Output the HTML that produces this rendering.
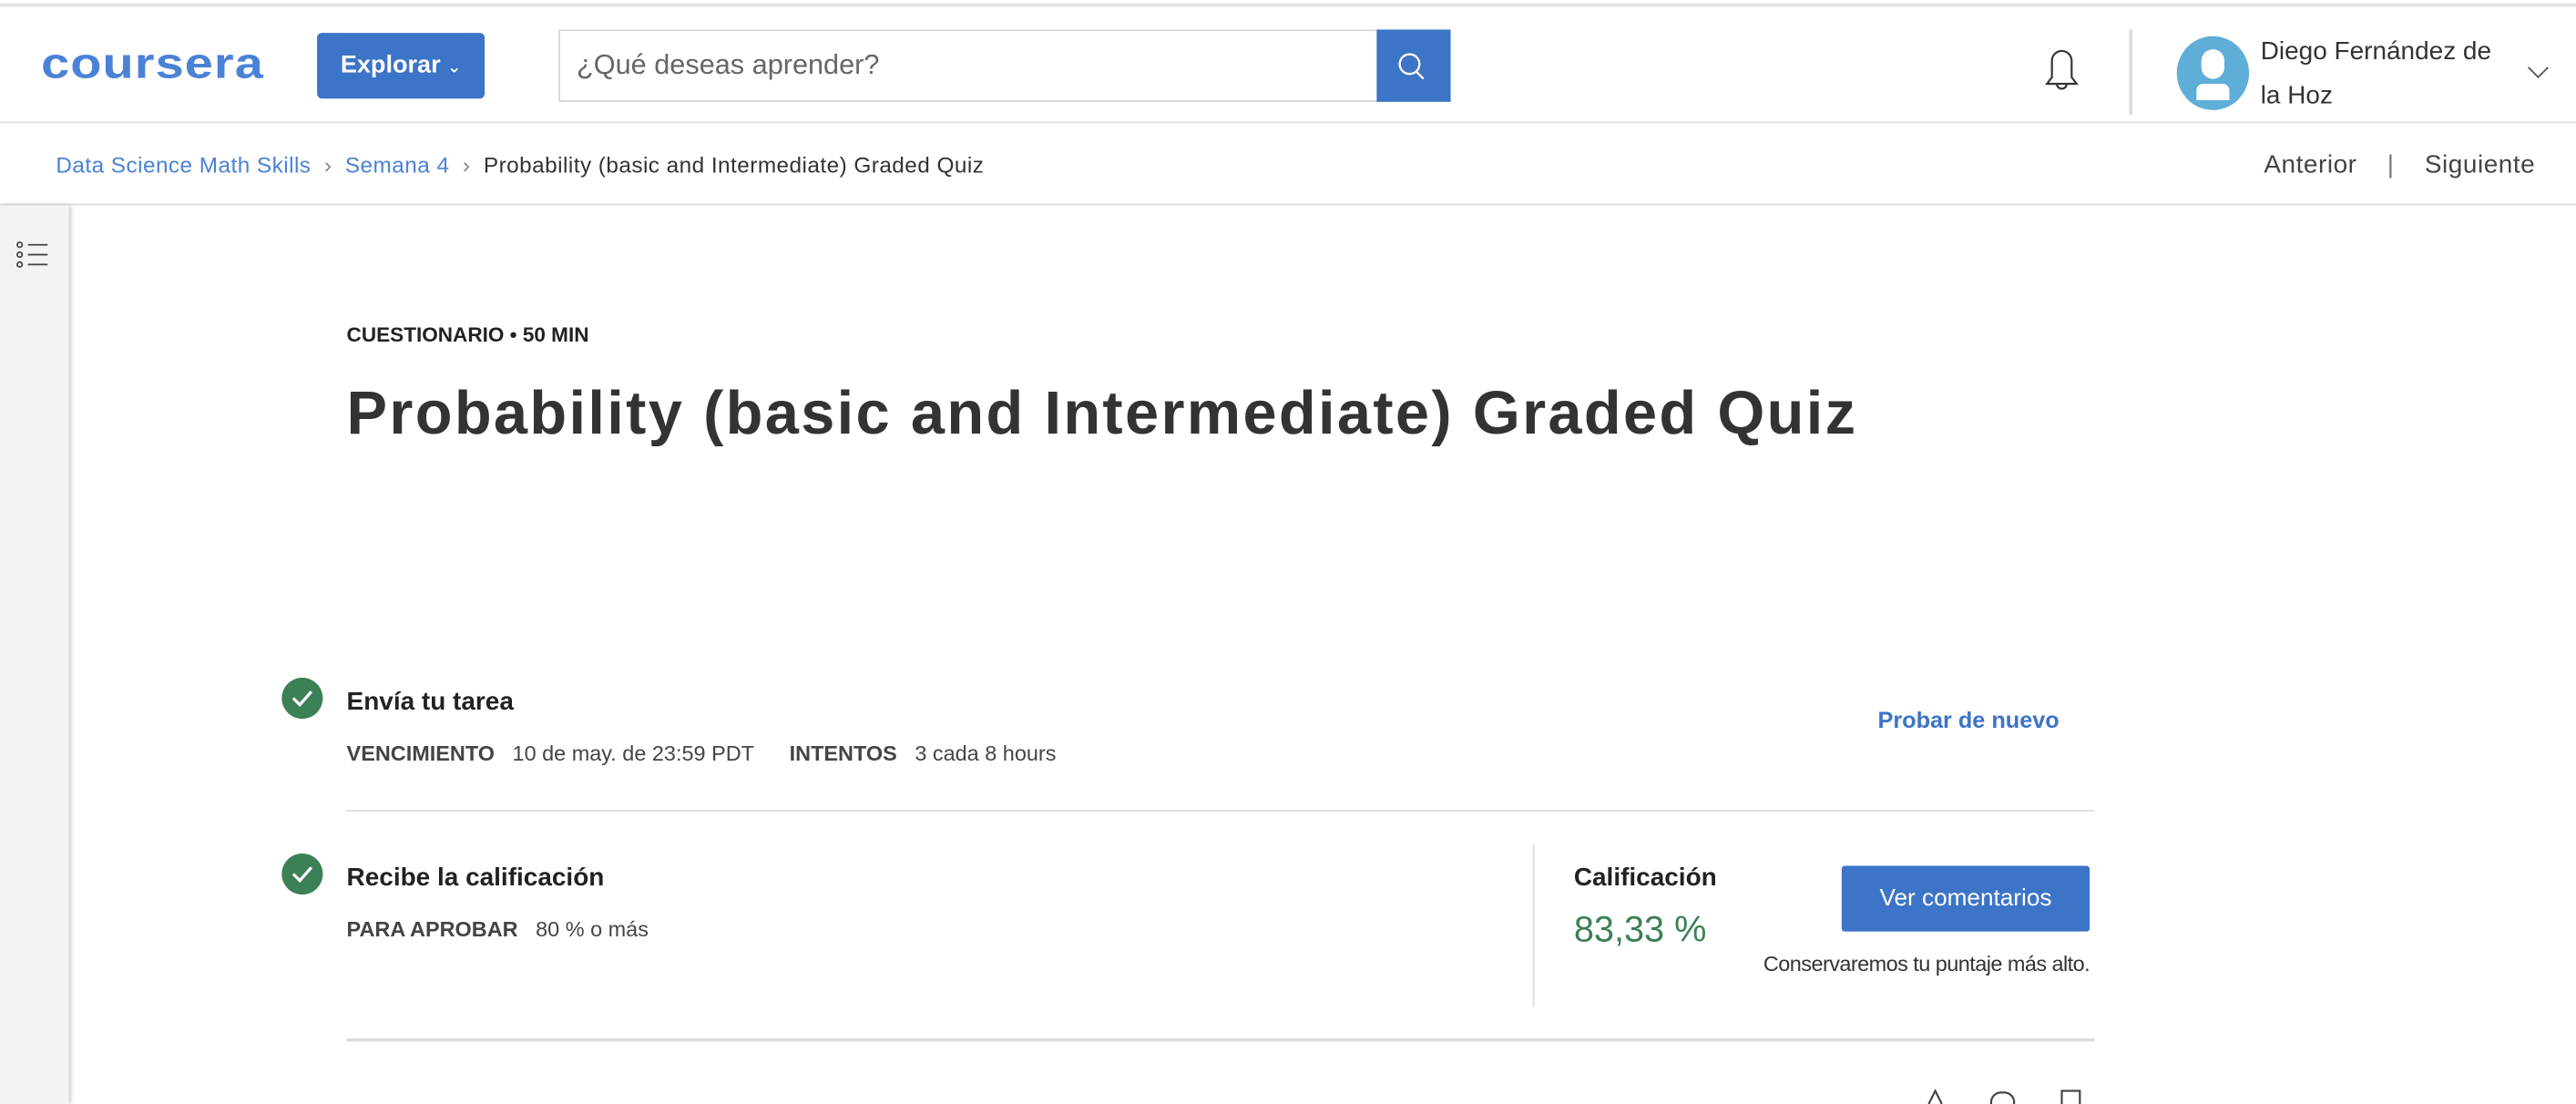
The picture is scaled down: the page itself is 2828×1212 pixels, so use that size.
<!DOCTYPE html>
<html><head><meta charset="utf-8"><style>
html,body{margin:0;padding:0;width:2828px;height:1212px;overflow:hidden;background:#fff}
#w{position:absolute;left:0;top:0;width:1568px;height:672px;transform:scale(1.80357);transform-origin:0 0;font-family:"Liberation Sans","DejaVu Sans",sans-serif;color:#333}
.a{position:absolute;white-space:nowrap}
.b{font-weight:bold}
</style></head><body><div id="w">
<div class="a" style="left:0;top:2px;width:1568px;height:2px;background:#e2e2e2"></div>
<div class="a" style="left:0;top:74px;width:1568px;height:1px;background:#ddd"></div>
<div class="a b" style="left:25px;top:22px;font-size:31px;color:#4a82d6;letter-spacing:0.6px;line-height:34px;transform:scaleY(0.85);transform-origin:0 50%">coursera</div>
<div class="a" style="left:193px;top:20px;width:102px;height:40px;background:#3c74c7;border-radius:3px;color:#fff;font-weight:bold;font-size:15px;line-height:40px;text-align:center">Explorar <span style="font-size:10px">&#8964;</span></div>
<div class="a" style="left:340px;top:18px;width:497px;height:42px;border:1px solid #d6d6d6;"></div>
<div class="a" style="left:351px;top:30px;font-size:17px;color:#666">¿Qué deseas aprender?</div>
<div class="a" style="left:838px;top:18px;width:45px;height:44px;background:#3c74c7"></div>
<svg class="a" style="left:849px;top:30px" width="22" height="22" viewBox="0 0 22 22"><circle cx="9" cy="9" r="6" fill="none" stroke="#fff" stroke-width="1.3"/><path d="M13 13.5L17.5 18" stroke="#fff" stroke-width="1.3"/></svg>
<svg class="a" style="left:1240px;top:27px" width="30" height="32" viewBox="0 0 30 32"><path d="M9 20V10a6 6 0 0 1 12 0v10l3 4H6z" fill="none" stroke="#333" stroke-width="1.2"/><path d="M12 24a3 3 0 0 0 6 0" fill="none" stroke="#333" stroke-width="1.2"/></svg>
<div class="a" style="left:1296px;top:18px;width:2px;height:52px;background:#ddd"></div>
<div class="a" style="left:1325px;top:22px;width:44px;height:45px;border-radius:50%;background:#5eaed8;overflow:hidden">
<div class="a" style="left:15px;top:8px;width:14px;height:18px;border-radius:7px;background:#fff"></div>
<div class="a" style="left:12px;top:29px;width:20px;height:10px;background:#fff;border-radius:4px 4px 0 0"></div></div>
<div class="a" style="left:1376px;top:18px;font-size:15.5px;line-height:27px;color:#333">Diego Fernández de<br>la Hoz</div>
<svg class="a" style="left:1537px;top:38px" width="16" height="12"><path d="M2 3l6 6 6-6" fill="none" stroke="#555" stroke-width="1"/></svg>
<div class="a" style="left:0;top:124px;width:1568px;height:1px;background:#ddd"></div>
<div class="a" style="left:34px;top:93px;font-size:13.5px;color:#4a82d6;letter-spacing:0.25px">Data Science Math Skills <span style="color:#888">&nbsp;›&nbsp;</span> Semana 4 <span style="color:#888">&nbsp;›&nbsp;</span> <span style="color:#333">Probability (basic and Intermediate) Graded Quiz</span></div>
<div class="a" style="left:1378px;top:92px;font-size:15.5px;color:#444;letter-spacing:0.3px">Anterior &nbsp;&nbsp;&nbsp;<span style="color:#777">|</span>&nbsp;&nbsp;&nbsp; Siguiente</div>
<div class="a" style="left:0;top:125px;width:42px;height:547px;background:#f3f3f3;box-shadow:1px 0 3px #bbb"></div>
<svg class="a" style="left:9px;top:146px" width="22" height="18"><g stroke="#444" stroke-width="1" fill="none"><circle cx="3" cy="3" r="1.5"/><circle cx="3" cy="9" r="1.5"/><circle cx="3" cy="15" r="1.5"/><path d="M8 3h12M8 9h12M8 15h12"/></g></svg>
<div class="a b" style="left:211px;top:197px;font-size:12.5px;color:#222">CUESTIONARIO • 50 MIN</div>
<div class="a b" style="left:211px;top:231px;font-size:37px;color:#333;letter-spacing:1.3px">Probability (basic and Intermediate) Graded Quiz</div>
<svg class="a" style="left:171px;top:412px" width="26" height="26"><circle cx="13" cy="13" r="12.5" fill="#3c8055"/><path d="M7.5 13l4 4 7-8" fill="none" stroke="#fff" stroke-width="1.8"/></svg>
<div class="a b" style="left:211px;top:419px;font-size:15.5px;color:#222">Envía tu tarea</div>
<div class="a" style="left:211px;top:451px;font-size:13px;color:#444"><b>VENCIMIENTO</b>&nbsp;&nbsp; 10 de may. de 23:59 PDT &nbsp;&nbsp;&nbsp;&nbsp; <b>INTENTOS</b>&nbsp;&nbsp; 3 cada 8 hours</div>
<div class="a b" style="left:1143px;top:430px;font-size:14px;color:#3c74c7">Probar de nuevo</div>
<div class="a" style="left:211px;top:493px;width:1064px;height:1px;background:#ddd"></div>
<svg class="a" style="left:171px;top:519px" width="26" height="26"><circle cx="13" cy="13" r="12.5" fill="#3c8055"/><path d="M7.5 13l4 4 7-8" fill="none" stroke="#fff" stroke-width="1.8"/></svg>
<div class="a b" style="left:211px;top:526px;font-size:15.5px;color:#222">Recibe la calificación</div>
<div class="a" style="left:211px;top:558px;font-size:13px;color:#444"><b>PARA APROBAR</b>&nbsp;&nbsp; 80 % o más</div>
<div class="a" style="left:933px;top:514px;width:1px;height:99px;background:#ddd"></div>
<div class="a b" style="left:958px;top:526px;font-size:15.5px;color:#222">Calificación</div>
<div class="a" style="left:958px;top:553px;font-size:22px;color:#3c8055">83,33 %</div>
<div class="a" style="left:1121px;top:527px;width:151px;height:40px;background:#3c74c7;border-radius:2px;color:#fff;font-size:14.5px;line-height:40px;text-align:center">Ver comentarios</div>
<div class="a" style="left:1030px;top:579px;width:242px;text-align:right;font-size:13px;color:#333;letter-spacing:-0.3px">Conservaremos tu puntaje más alto.</div>
<div class="a" style="left:211px;top:632px;width:1064px;height:2px;background:#ddd"></div>
<svg class="a" style="left:1168px;top:662px" width="110" height="10"><g fill="none" stroke="#444" stroke-width="1.2"><path d="M6 10l4-8 4 8"/><rect x="44" y="3" width="14" height="12" rx="6"/><rect x="87" y="2" width="11" height="12"/></g></svg>
</div></body></html>
